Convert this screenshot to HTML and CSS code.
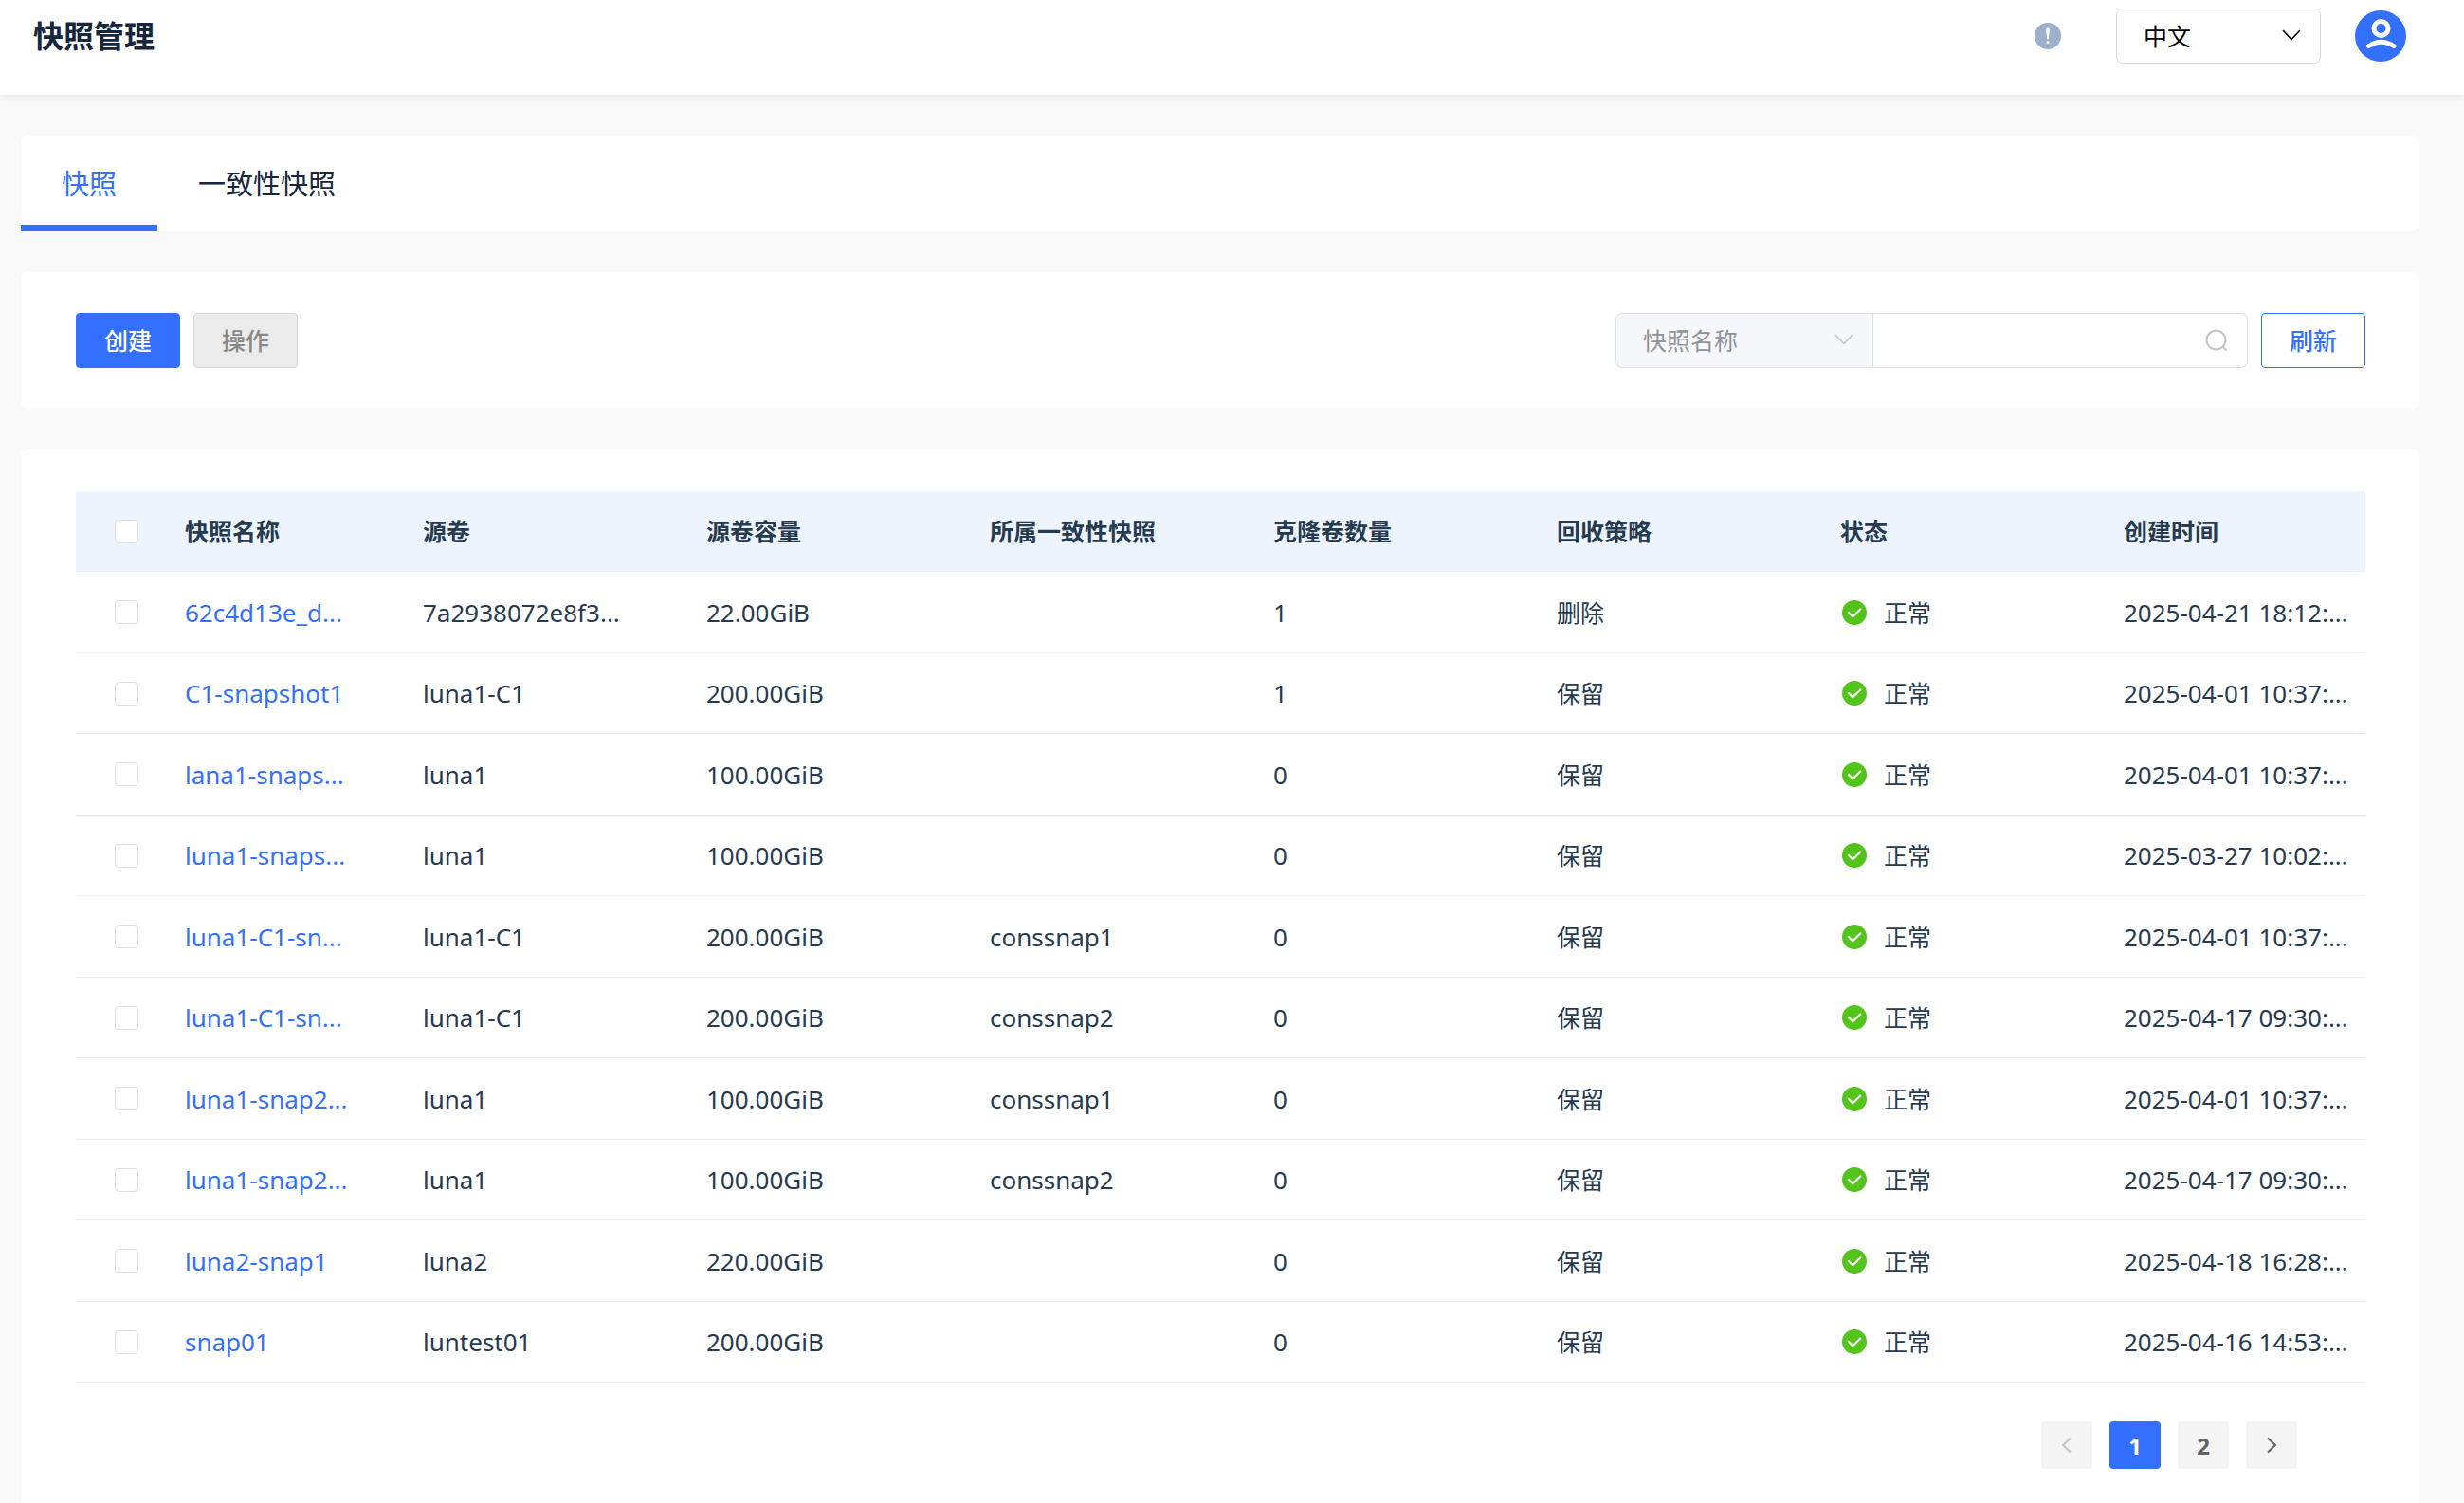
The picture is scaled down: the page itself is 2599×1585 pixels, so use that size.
FILE: index.html
```html
<!DOCTYPE html>
<html lang="zh-CN">
<head>
  <meta charset="UTF-8">
  <meta name="viewport" content="width=device-width, initial-scale=1.0">
  <title>快照管理</title>
  <link rel="stylesheet" href="styles.css">
</head>
<body>
  <header class="header">
    <h1>快照管理</h1>
    <div class="header-right">
      <button class="icon-btn" type="button" aria-label="提示">
        <svg width="28" height="28" viewBox="0 0 28 28">
          <circle cx="14" cy="14" r="14" fill="#9cb0c9"/>
          <path d="M12.1 6.8a1.9 1.2 0 0 1 3.8 0L15 17h-2z" fill="#fff"/>
          <circle cx="14" cy="20.6" r="1.6" fill="#fff"/>
        </svg>
      </button>
      <div class="select lang">
        <select aria-label="语言">
          <option>中文</option>
          <option>English</option>
        </select>
        <svg class="arrow" width="20" height="12" viewBox="0 0 20 12"><path d="M1 1l9 9.500l9-9.500"/></svg>
      </div>
      <button class="icon-btn" type="button" aria-label="用户">
        <svg width="54" height="54" viewBox="0 0 54 54">
          <circle cx="27" cy="27" r="27" fill="#3370ff"/>
          <circle cx="27.500" cy="19" r="7.500" fill="none" stroke="#fff" stroke-width="5"/>
          <path d="M14.500 37.500q13-8.500 26.500 0" fill="none" stroke="#fff" stroke-width="5" stroke-linecap="round"/>
        </svg>
      </button>
    </div>
  </header>

  <main>
    <nav class="card tabs">
      <a class="tab active" href="#snapshot">快照</a>
      <a class="tab" href="#consistency">一致性快照</a>
    </nav>

    <section class="card toolbar">
      <div class="actions">
        <button class="btn primary" type="button">创建</button>
        <button class="btn" type="button" disabled>操作</button>
      </div>
      <div class="search">
        <div class="search-group">
          <div class="select field">
            <select aria-label="搜索字段">
              <option>快照名称</option>
              <option>源卷</option>
            </select>
            <svg class="arrow" width="20" height="12" viewBox="0 0 20 12"><path d="M1 1l9 9.500l9-9.500"/></svg>
          </div>
          <div class="search-box">
            <input type="text" aria-label="搜索">
            <svg width="24" height="24" viewBox="0 0 24 24" fill="none" stroke="#c0c4cc" stroke-width="2"><circle cx="11.500" cy="11.500" r="10"/><path d="M18.500 18.500l4 4"/></svg>
          </div>
        </div>
        <button class="btn plain" type="button">刷新</button>
      </div>
    </section>

    <section class="card list">
      <table>
        <colgroup>
          <col class="col-check">
          <col class="col-name">
          <col span="6">
          <col class="col-time">
        </colgroup>
        <thead>
          <tr>
            <th class="check"><input type="checkbox" aria-label="全选"></th>
            <th>快照名称</th>
            <th>源卷</th>
            <th>源卷容量</th>
            <th>所属一致性快照</th>
            <th>克隆卷数量</th>
            <th>回收策略</th>
            <th>状态</th>
            <th>创建时间</th>
          </tr>
        </thead>
        <tbody id="rows"></tbody>
      </table>

      <nav class="pagination" aria-label="分页">
        <button type="button" disabled aria-label="上一页">
          <svg width="12" height="18" viewBox="0 0 12 18"><path d="M10 1.500l-8 7.500l8 7.500"/></svg>
        </button>
        <button class="current" type="button">1</button>
        <button type="button">2</button>
        <button type="button" aria-label="下一页">
          <svg width="12" height="18" viewBox="0 0 12 18"><path d="M2 1.500l8 7.500l-8 7.500"/></svg>
        </button>
      </nav>
    </section>
  </main>

  <script>
    // 名称, 源卷, 容量, 一致性快照, 克隆卷数量, 回收策略, 创建时间
    const snapshots = [
      ['62c4d13e_d...', '7a2938072e8f3...', '22.00GiB', '', 1, '删除', '2025-04-21 18:12:...'],
      ['C1-snapshot1', 'luna1-C1', '200.00GiB', '', 1, '保留', '2025-04-01 10:37:...'],
      ['lana1-snaps...', 'luna1', '100.00GiB', '', 0, '保留', '2025-04-01 10:37:...'],
      ['luna1-snaps...', 'luna1', '100.00GiB', '', 0, '保留', '2025-03-27 10:02:...'],
      ['luna1-C1-sn...', 'luna1-C1', '200.00GiB', 'conssnap1', 0, '保留', '2025-04-01 10:37:...'],
      ['luna1-C1-sn...', 'luna1-C1', '200.00GiB', 'conssnap2', 0, '保留', '2025-04-17 09:30:...'],
      ['luna1-snap2...', 'luna1', '100.00GiB', 'conssnap1', 0, '保留', '2025-04-01 10:37:...'],
      ['luna1-snap2...', 'luna1', '100.00GiB', 'conssnap2', 0, '保留', '2025-04-17 09:30:...'],
      ['luna2-snap1', 'luna2', '220.00GiB', '', 0, '保留', '2025-04-18 16:28:...'],
      ['snap01', 'luntest01', '200.00GiB', '', 0, '保留', '2025-04-16 14:53:...']
    ];

    const okIcon = `<svg width="26" height="26" viewBox="0 0 26 26">
      <circle cx="13" cy="13" r="13" fill="#52c41a"/>
      <path d="M7 13l4.300 4.300l8-7.800" fill="none" stroke="#fff" stroke-width="2.200" stroke-linecap="round"/></svg>`;

    document.getElementById('rows').innerHTML = snapshots.map(s => `
      <tr>
        <td class="check"><input type="checkbox" aria-label="选择 ${s[0]}"></td>
        <td><a href="#">${s[0]}</a></td>
        <td>${s[1]}</td>
        <td>${s[2]}</td>
        <td>${s[3]}</td>
        <td>${s[4]}</td>
        <td class="cn">${s[5]}</td>
        <td class="cn"><span class="status">${okIcon}正常</span></td>
        <td>${s[6]}</td>
      </tr>`).join('');
  </script>
</body>
</html>
```

FILE: styles.css
```css
* {
  margin: 0;
  padding: 0;
  box-sizing: border-box;
}

body {
  display: flex;
  flex-direction: column;
  min-height: 100vh;
  font-family: "Noto Sans", "Noto Sans CJK SC", sans-serif;
  font-size: 25px;
  color: #263a50;
  background-color: #f9f9f9;
}

button,
input,
select {
  font: inherit;
  color: inherit;
}

button {
  cursor: pointer;
}

a {
  color: #3370ff;
  text-decoration: none;
}

/* header */
.header {
  display: flex;
  justify-content: space-between;
  align-items: center;
  height: 100px;
  padding: 0 61px 25px 35px;
  background-color: #fff;
  box-shadow: 0 2px 8px rgba(0, 0, 0, 0.08);
}

.header h1 {
  font-size: 32px;
  line-height: 40px;
  color: #17263c;
}

.header-right {
  display: flex;
  align-items: center;
}

.icon-btn {
  display: flex;
  border: none;
  background: none;
}

/* select */
.select {
  position: relative;
  height: 58px;
}

.select select {
  width: 100%;
  height: 100%;
  padding: 0 28px;
  appearance: none;
  border: 1px solid #d9d9d9;
  border-radius: 7px;
  background-color: #fff;
}

.arrow {
  position: absolute;
  top: 22px;
  right: 21px;
  fill: none;
  stroke: currentColor;
  stroke-width: 1.6;
  pointer-events: none;
}

.lang {
  width: 216px;
  margin: 0 36px 0 58px;
  color: #000;
}

/* cards */
main {
  flex: 1;
  display: flex;
  flex-direction: column;
  gap: 43px;
  padding: 43px 47px 0 22px;
}

.card {
  border-radius: 8px;
  background-color: #fff;
}

.tabs {
  display: flex;
}

.tab {
  height: 101px;
  padding: 0 43px;
  font-size: 29px;
  line-height: 101px;
  color: #17263c;
}

.tab.active {
  color: #3370ff;
  box-shadow: inset 0 -7px #3370ff;
}

.toolbar {
  display: flex;
  justify-content: space-between;
  padding: 43px 57px 43px 58px;
}

.actions,
.search {
  display: flex;
  gap: 14px;
}

.btn {
  width: 110px;
  height: 58px;
  border: 1px solid #d9d9d9;
  border-radius: 4px;
  font-weight: 500;
  line-height: 54px;
  color: #888;
  background-color: #ebebeb;
}

.btn.primary {
  border-color: #3370ff;
  color: #fff;
  background-color: #3370ff;
}

.btn.plain {
  border-color: #3370ff;
  color: #3370ff;
  background-color: #fff;
}

.search-group {
  display: flex;
  width: 667px;
}

.field {
  flex: none;
  width: 272px;
  color: #c0c4cc;
}

.field select {
  border-color: #dcdfe6;
  border-radius: 7px 0 0 7px;
  color: #909399;
  background-color: #f5f7fa;
}

.search-box {
  flex: 1;
  display: flex;
  align-items: center;
  min-width: 0;
  height: 58px;
  padding: 0 20px;
  border: 1px solid #dcdfe6;
  border-left: none;
  border-radius: 0 7px 7px 0;
}

.search-box input {
  flex: 1;
  min-width: 0;
  height: 100%;
  border: none;
  outline: none;
}

/* table */
.list {
  flex: 1;
  padding: 44px 57px 36px 58px;
  border-radius: 8px 8px 0 0;
}

table {
  width: 100%;
  table-layout: fixed;
  border-collapse: separate;
  border-spacing: 0;
}

.col-check {
  width: 97px;
}

.col-name {
  width: 251px;
}

.col-time {
  width: 273px;
}

th,
td {
  height: 86px;
  padding: 0 0 0 18px;
  border-bottom: 1px solid #ebeef5;
  text-align: left;
  vertical-align: middle;
  line-height: 36px;
  white-space: nowrap;
}

th {
  height: 85px;
  background-color: #edf4fd;
}

td {
  font-size: 26px;
}

tbody tr:nth-child(even) td {
  height: 85px;
}

td.cn {
  font-size: 25px;
}

.check {
  padding-left: 41px;
}

.check input {
  display: block;
  width: 25px;
  height: 25px;
  appearance: none;
  border: 1px solid #dcdfe6;
  border-radius: 4px;
  background-color: #fff;
}

.check input:checked {
  border-color: #3370ff;
  background-color: #3370ff;
}

.status {
  display: flex;
  align-items: center;
  gap: 18px;
  padding-left: 2px;
}

/* pagination */
.pagination {
  display: flex;
  justify-content: flex-end;
  gap: 18px;
  padding: 41px 72px 0 0;
}

.pagination button {
  display: flex;
  align-items: center;
  justify-content: center;
  width: 54px;
  height: 50px;
  border: none;
  border-radius: 4px;
  font-size: 24px;
  font-weight: bold;
  color: #606266;
  background-color: #f4f4f5;
}

.pagination button:disabled {
  color: #c0c4cc;
}

.pagination .current {
  color: #fff;
  background-color: #3370ff;
}

.pagination svg {
  fill: none;
  stroke: currentColor;
  stroke-width: 2;
}
```
